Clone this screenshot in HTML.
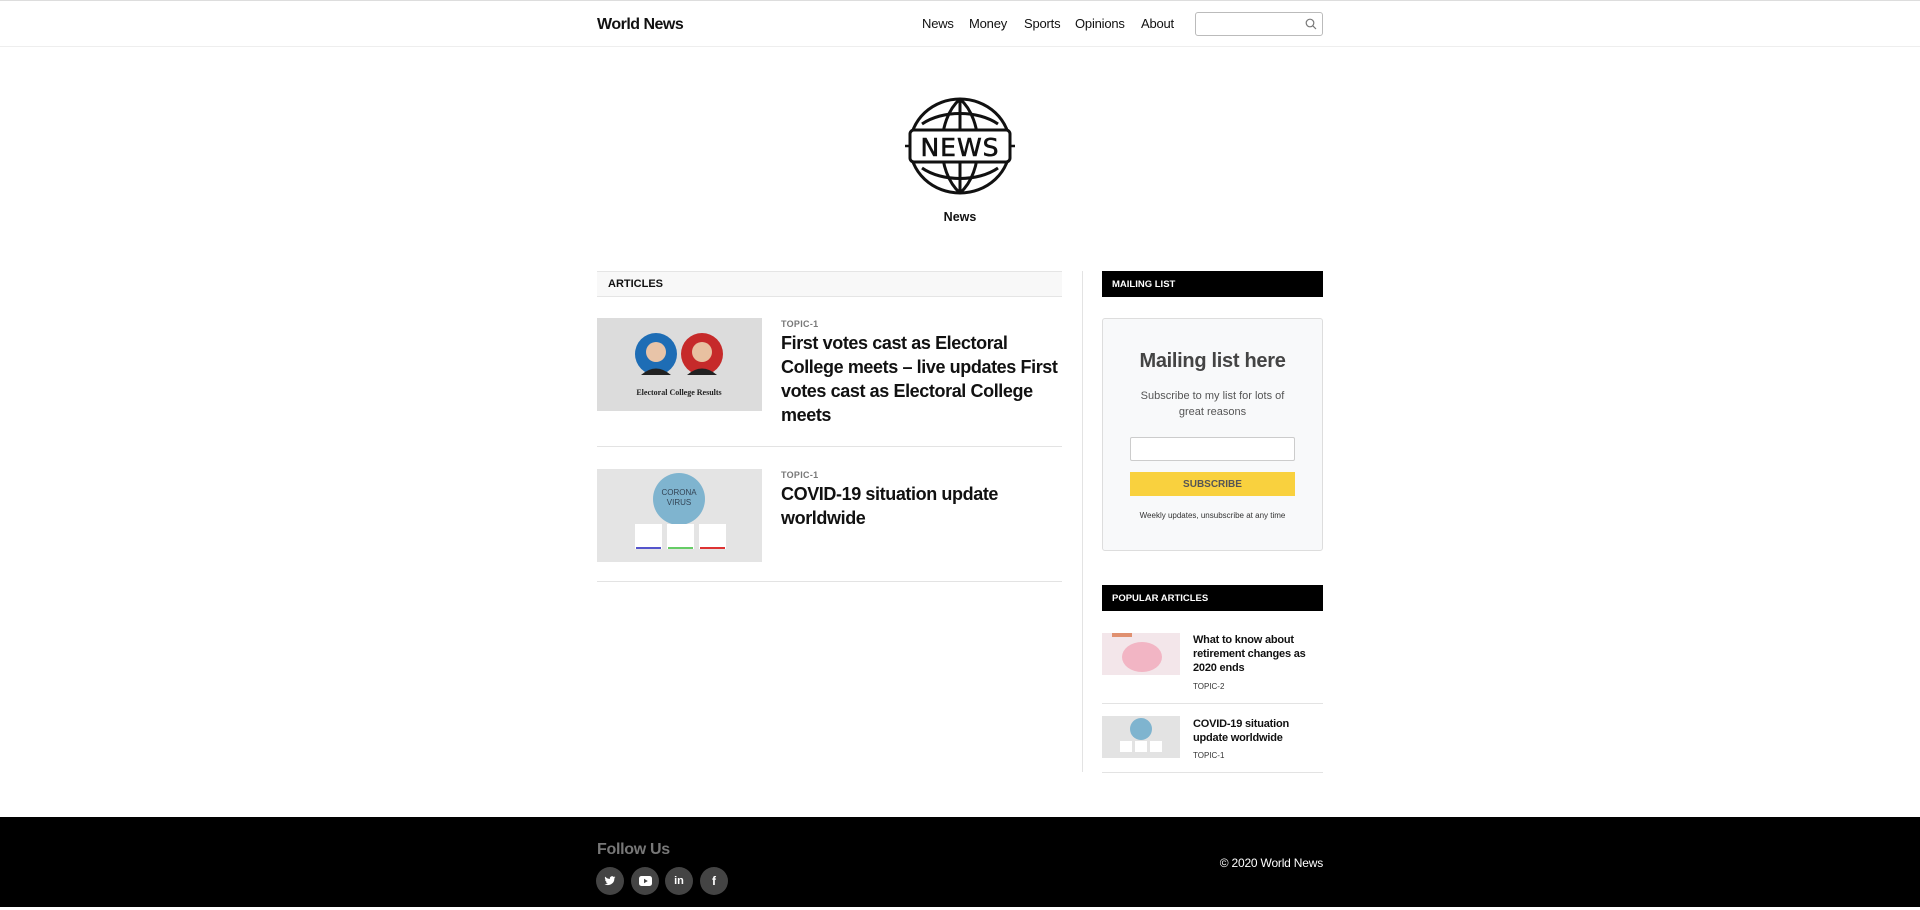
<!DOCTYPE html>
<html><head><meta charset="utf-8"><style>
*{box-sizing:border-box;margin:0;padding:0}
body{width:1920px;height:910px;background:#fff;font-family:"Liberation Sans",sans-serif;color:#111;position:relative;overflow:hidden}
.a{position:absolute}
.hdr{left:0;top:0;width:1920px;height:47px;border-top:1px solid #ddd;border-bottom:1px solid #eee}
.nav{font-size:13px;top:16px;letter-spacing:-0.2px}
.logo{left:597px;top:16px;font-size:16px;font-weight:bold;letter-spacing:-0.5px}
.search{left:1195px;top:12px;width:128px;height:24px;border:1px solid #bbb;border-radius:3px}
.bar{height:26px;font-size:11px;font-weight:bold;padding-left:11px;line-height:28px}
.topic{font-size:9px;color:#777;font-weight:bold;letter-spacing:.3px}
.t{font-size:18px;font-weight:bold;line-height:24px;color:#111;letter-spacing:-0.4px;white-space:nowrap}
.hr{height:1px;background:#e3e3e3}
.pt{font-size:11px;font-weight:bold;line-height:14px;letter-spacing:-0.2px}
.ptop{font-size:8px;color:#333}
.ic{width:28px;height:28px;border-radius:50%;background:#444;top:867px;color:#fff;font-size:12px;font-weight:bold;text-align:center;line-height:28px}
</style></head><body>
<div class="a hdr"></div>
<div class="a logo">World News</div>
<div class="a nav" style="left:922px">News</div>
<div class="a nav" style="left:969px">Money</div>
<div class="a nav" style="left:1024px">Sports</div>
<div class="a nav" style="left:1075px">Opinions</div>
<div class="a nav" style="left:1141px">About</div>
<div class="a search"><svg class="a" style="right:5px;top:5px" width="12" height="12" viewBox="0 0 12 12"><circle cx="5" cy="5" r="3.8" fill="none" stroke="#777" stroke-width="1.2"/><line x1="7.8" y1="7.8" x2="11" y2="11" stroke="#777" stroke-width="1.2"/></svg></div>

<svg class="a" style="left:900px;top:90px" width="120" height="110" viewBox="0 0 120 110">
<g fill="none" stroke="#111" stroke-width="3">
<ellipse cx="60" cy="56" rx="50" ry="47"/>
<path d="M60 9 C36 30 36 82 60 103"/>
<path d="M60 9 C84 30 84 82 60 103"/>
<line x1="60" y1="9" x2="60" y2="40"/>
<line x1="60" y1="72" x2="60" y2="103"/>
<path d="M22 34 C42 20 78 20 98 34"/>
<path d="M22 78 C42 92 78 92 98 78"/>
<rect x="10" y="40" width="100" height="32" rx="4" fill="#fff"/>
</g>
<line x1="5" y1="56" x2="10" y2="56" stroke="#111" stroke-width="2.5"/>
<line x1="110" y1="56" x2="115" y2="56" stroke="#111" stroke-width="2.5"/>
<text x="60" y="66" text-anchor="middle" font-family="DejaVu Sans" font-size="25" fill="#111" stroke="#111" stroke-width="0.6" letter-spacing="1">NEWS</text>
</svg>
<div class="a" style="left:0;width:1920px;text-align:center;top:210px;font-size:12.5px;font-weight:bold">News</div>

<div class="a bar" style="left:597px;top:271px;width:465px;background:#f8f8f8;border-top:1px solid #e5e5e5;border-bottom:1px solid #e5e5e5;line-height:25px">ARTICLES</div>

<svg class="a" style="left:597px;top:318px" width="165" height="93" viewBox="0 0 165 93"><rect width="165" height="93" fill="#dcdcdc"/><circle cx="59" cy="36" r="21" fill="#1e6db5"/><circle cx="105" cy="36" r="21" fill="#c62a2a"/><circle cx="59" cy="34" r="10" fill="#e8c4a8"/><circle cx="105" cy="34" r="10" fill="#e8c0a0"/><path d="M44 57 Q59 44 74 57Z" fill="#222"/><path d="M90 57 Q105 44 120 57Z" fill="#222"/><text x="82" y="77" text-anchor="middle" font-family="Liberation Serif" font-size="8" font-weight="bold" fill="#222">Electoral College Results</text></svg>
<div class="a topic" style="left:781px;top:319px">TOPIC-1</div>
<div class="a t" style="left:781px;top:331px">First votes cast as Electoral<br>College meets – live updates First<br>votes cast as Electoral College<br>meets</div>
<div class="a hr" style="left:597px;top:446px;width:465px"></div>

<svg class="a" style="left:597px;top:469px" width="165" height="93" viewBox="0 0 165 93"><rect width="165" height="93" fill="#e4e4e4"/><circle cx="82" cy="30" r="26" fill="#7fb4cf"/><text x="82" y="26" text-anchor="middle" font-size="8" fill="#345">CORONA</text><text x="82" y="36" text-anchor="middle" font-size="8" fill="#345">VIRUS</text><rect x="38" y="55" width="27" height="25" fill="#fff"/><rect x="70" y="55" width="27" height="25" fill="#fff"/><rect x="102" y="55" width="27" height="25" fill="#fff"/><rect x="39" y="78" width="25" height="2" fill="#55c"/><rect x="71" y="78" width="25" height="2" fill="#6c6"/><rect x="103" y="78" width="25" height="2" fill="#d33"/></svg>
<div class="a topic" style="left:781px;top:470px">TOPIC-1</div>
<div class="a t" style="left:781px;top:482px">COVID-19 situation update<br>worldwide</div>
<div class="a hr" style="left:597px;top:581px;width:465px"></div>

<div class="a" style="left:1082px;top:271px;width:1px;height:501px;background:#e3e3e3"></div>

<div class="a bar" style="left:1102px;top:271px;width:221px;background:#000;color:#fff;font-size:9.5px;padding-left:10px">MAILING LIST</div>
<div class="a" style="left:1102px;top:318px;width:221px;height:233px;background:#f8f9fa;border:1px solid #ddd;border-radius:3px;text-align:center">
<div style="font-size:20px;font-weight:bold;color:#444;margin-top:31px;letter-spacing:-0.3px">Mailing list here</div>
<div style="font-size:11px;color:#555;line-height:16px;margin-top:15px;padding:0 30px">Subscribe to my list for lots of great reasons</div>
<div style="margin:17px auto 0;width:165px;height:24px;background:#fff;border:1px solid #ccc;border-radius:2px"></div>
<div style="margin:11px auto 0;width:165px;height:24px;background:#f9d13e;font-size:10px;font-weight:bold;color:#555;line-height:26px">SUBSCRIBE</div>
<div style="font-size:8px;color:#333;margin-top:15px">Weekly updates, unsubscribe at any time</div>
</div>

<div class="a bar" style="left:1102px;top:585px;width:221px;background:#000;color:#fff;font-size:9.5px;padding-left:10px">POPULAR ARTICLES</div>
<svg class="a" style="left:1102px;top:633px" width="78" height="42"><rect width="78" height="42" fill="#f3e6ea"/><ellipse cx="40" cy="24" rx="20" ry="15" fill="#f2b5c4"/><rect x="10" y="0" width="20" height="4" fill="#e09070"/></svg>
<div class="a pt" style="left:1193px;top:633px;width:130px">What to know about retirement changes as 2020 ends</div>
<div class="a ptop" style="left:1193px;top:682px">TOPIC-2</div>
<div class="a hr" style="left:1102px;top:703px;width:221px"></div>
<svg class="a" style="left:1102px;top:716px" width="78" height="42"><rect width="78" height="42" fill="#e3e3e3"/><circle cx="39" cy="13" r="11" fill="#7fb4cf"/><rect x="18" y="25" width="12" height="11" fill="#fff"/><rect x="33" y="25" width="12" height="11" fill="#fff"/><rect x="48" y="25" width="12" height="11" fill="#fff"/></svg>
<div class="a pt" style="left:1193px;top:717px;width:130px">COVID-19 situation update worldwide</div>
<div class="a ptop" style="left:1193px;top:751px">TOPIC-1</div>
<div class="a hr" style="left:1102px;top:772px;width:221px"></div>

<div class="a" style="left:0;top:817px;width:1920px;height:90px;background:#000"></div>
<div class="a" style="left:597px;top:841px;font-size:16px;font-weight:bold;color:#777;letter-spacing:-0.3px">Follow Us</div>
<div class="a ic" style="left:596px"><svg width="12" height="12" viewBox="0 0 24 24" style="margin-top:8px"><path fill="#fff" d="M23 4.6c-.8.4-1.7.6-2.6.7.9-.6 1.6-1.4 2-2.5-.9.5-1.9.9-2.9 1.1A4.5 4.5 0 0 0 11.8 8 12.8 12.8 0 0 1 2.5 3.3a4.5 4.5 0 0 0 1.4 6c-.7 0-1.4-.2-2-.6 0 2.2 1.6 4 3.6 4.4-.7.2-1.4.2-2 .1.6 1.8 2.2 3.1 4.2 3.1A9 9 0 0 1 1 18.2 12.8 12.8 0 0 0 20.7 7.3V6.7c.9-.6 1.7-1.4 2.3-2.1z"/></svg></div>
<div class="a ic" style="left:631px"><svg width="13" height="10" viewBox="0 0 13 10" style="margin-top:9px"><rect width="13" height="10" rx="2.5" fill="#fff"/><path d="M5 2.8v4.4L8.8 5z" fill="#444"/></svg></div>
<div class="a ic" style="left:665px;font-size:11px">in</div>
<div class="a ic" style="left:700px">f</div>
<div class="a" style="left:1100px;top:856px;width:223px;text-align:right;font-size:12px;color:#fff;letter-spacing:-0.2px">© 2020 World News</div>
</body></html>
